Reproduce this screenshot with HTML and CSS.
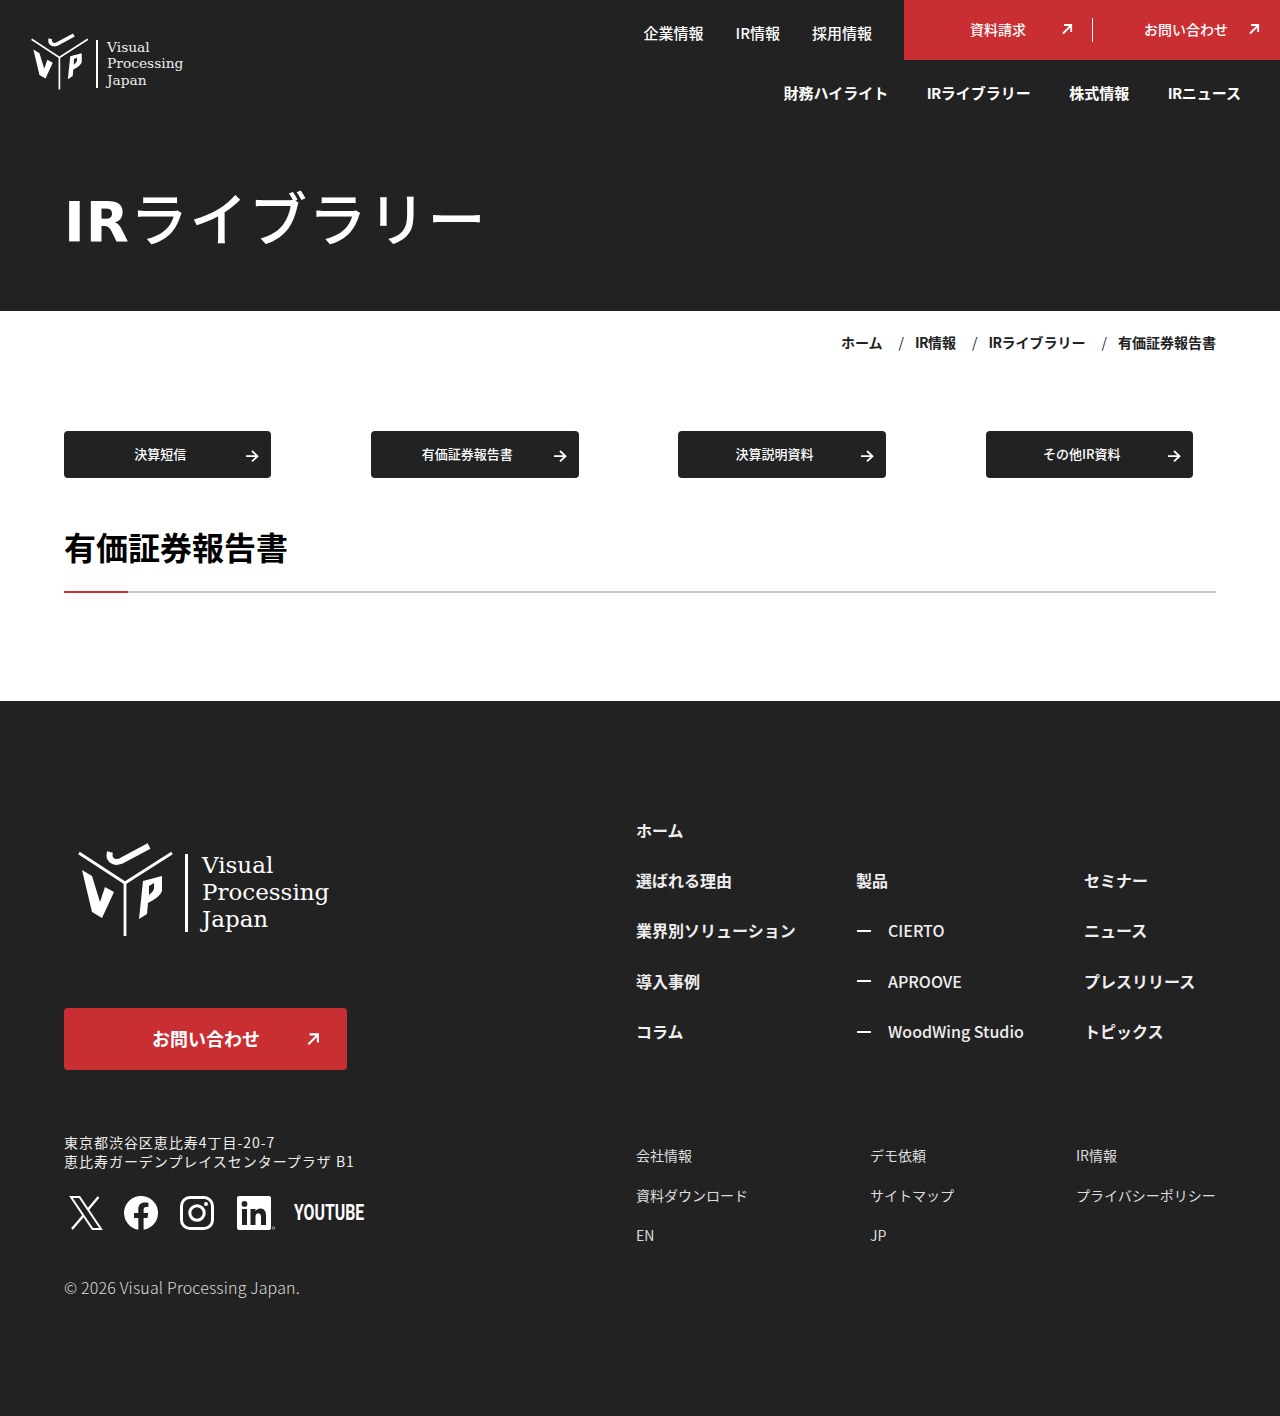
FILE: index.html
```html
<!DOCTYPE html>
<html lang="ja">
<head>
<meta charset="utf-8">
<title>有価証券報告書</title>
<link rel="stylesheet" href="styles.css">
</head>
<body>
<svg class="defs" width="0" height="0" aria-hidden="true">
  <symbol id="mark" viewBox="0 0 96 96">
    <path d="M1 12 L47 42 L94 12" fill="none" stroke="currentColor" stroke-width="2.800"/>
    <path d="M47 42 V95" fill="none" stroke="currentColor" stroke-width="2.800"/>
    <path d="M32 11 C30 18 35 23 43 20 L71 5" fill="none" stroke="currentColor" stroke-width="6"/>
    <path d="M4 29 L14 35 L22 61 L27 46 L36 51 L24 77 L14 71 Z" fill="currentColor"/>
    <path d="M65 40 L84 35 L84 50 Q82 56 70 62 L69 73 L61 78 Z M71 45 L76 42 V48 Q75 51 71 54 Z" fill="currentColor" fill-rule="evenodd"/>
  </symbol>
  <symbol id="ne" viewBox="0 0 12 12">
    <path d="M2 10.500 L10 2.500 M3 2 H10.200 V9" fill="none" stroke="currentColor" stroke-width="1.800"/>
  </symbol>
  <symbol id="right" viewBox="0 0 14 14">
    <path d="M1 7.200 H12.500 M7 2 L12.500 7.200 L7 12.400" fill="none" stroke="currentColor" stroke-width="1.800"/>
  </symbol>
</svg>

<header class="hero">
  <div class="topbar">
    <a class="logo logo-small" href="#">
      <svg class="logo-mark"><use href="#mark"/></svg>
      <span class="logo-rule"></span>
      <span class="logo-text">Visual<br>Processing<br>Japan</span>
    </a>
    <div class="navs">
      <div class="nav-top">
        <nav class="nav-primary">
          <a href="#">企業情報</a>
          <a href="#">IR情報</a>
          <a href="#">採用情報</a>
        </nav>
        <div class="cta">
          <a class="cta-item cta-docs" href="#"><span>資料請求</span><svg class="ne"><use href="#ne"/></svg></a>
          <a class="cta-item cta-contact" href="#"><span>お問い合わせ</span><svg class="ne"><use href="#ne"/></svg></a>
        </div>
      </div>
      <nav class="nav-sub">
        <a href="#">財務ハイライト</a>
        <a href="#"><span class="tight">IR</span>ライブラリー</a>
        <a href="#">株式情報</a>
        <a href="#"><span class="tight">IR</span>ニュース</a>
      </nav>
    </div>
  </div>
  <h1 class="page-title"><span class="latin">IR</span>ライブラリー</h1>
</header>

<main class="content">
  <ol class="crumbs">
    <li>ホーム</li>
    <li><span class="tight">IR</span>情報</li>
    <li><span class="tight">IR</span>ライブラリー</li>
    <li>有価証券報告書</li>
  </ol>
  <div class="tabs">
    <a class="tab" href="#"><span>決算短信</span><svg class="arrow"><use href="#right"/></svg></a>
    <a class="tab" href="#"><span>有価証券報告書</span><svg class="arrow"><use href="#right"/></svg></a>
    <a class="tab" href="#"><span>決算説明資料</span><svg class="arrow"><use href="#right"/></svg></a>
    <a class="tab" href="#"><span>その他IR資料</span><svg class="arrow"><use href="#right"/></svg></a>
  </div>
  <h2 class="section-title">有価証券報告書</h2>
</main>

<footer class="footer">
  <div class="footer-left">
    <a class="logo logo-large" href="#">
      <svg class="logo-mark"><use href="#mark"/></svg>
      <span class="logo-rule"></span>
      <span class="logo-text">Visual<br>Processing<br>Japan</span>
    </a>
    <a class="contact-btn" href="#"><span>お問い合わせ</span><svg class="ne-large"><use href="#ne"/></svg></a>
    <address class="address">東京都渋谷区恵比寿4丁目-20-7<br>恵比寿ガーデンプレイスセンタープラザ B1</address>
    <div class="social">
      <svg class="sns sns-x" viewBox="0 0 32 34"><path d="M1 1 H9.500 L31 33 H22.500 Z" fill="none" stroke="currentColor" stroke-width="2"/><path d="M28.500 1 L18 13.500 M13.500 19.500 L2 33" fill="none" stroke="currentColor" stroke-width="2.400"/></svg>
      <svg class="sns sns-fb" viewBox="0 0 34 34"><path fill="currentColor" d="M34 17 A17 17 0 1 0 14.300 33.800 V22 H10 V17 H14.300 V13.200 C14.300 9 16.800 6.600 20.700 6.600 C22.500 6.600 24.400 7 24.400 7 V11.100 H22.300 C20.200 11.100 19.600 12.400 19.600 13.700 V17 H24.200 L23.500 22 H19.600 V33.800 A17 17 0 0 0 34 17 Z"/></svg>
      <svg class="sns sns-ig" viewBox="0 0 34 34"><rect x="1.500" y="1.500" width="31" height="31" rx="8.500" fill="none" stroke="currentColor" stroke-width="3"/><circle cx="17" cy="17" r="7.200" fill="none" stroke="currentColor" stroke-width="3"/><circle cx="26" cy="8" r="2" fill="currentColor"/></svg>
      <svg class="sns sns-in" viewBox="0 0 40 34"><path fill="currentColor" fill-rule="evenodd" d="M2 0 H32 A2 2 0 0 1 34 2 V32 A2 2 0 0 1 32 34 H2 A2 2 0 0 1 0 32 V2 A2 2 0 0 1 2 0 Z M5 13 V29 H10 V13 Z M7.500 5 A2.900 2.900 0 1 0 7.500 10.800 A2.900 2.900 0 1 0 7.500 5 Z M13.500 13 V29 H18.500 V20.500 C18.500 16 24 16 24 20.500 V29 H29 V19 C29 11.500 21 11 18.500 15 V13 Z"/><circle cx="36.500" cy="32" r="1.300" fill="none" stroke="currentColor" stroke-width=".5"/></svg>
      <span class="youtube">YOUTUBE</span>
    </div>
    <p class="copyright">© 2026 Visual Processing Japan.</p>
  </div>
  <div class="footer-right">
    <div class="site-map">
      <a class="map-home" href="#">ホーム</a>
      <div class="map-cols">
        <ul class="map-col map-col-a">
          <li>選ばれる理由</li>
          <li>業界別ソリューション</li>
          <li>導入事例</li>
          <li>コラム</li>
        </ul>
        <ul class="map-col map-col-b">
          <li>製品</li>
          <li class="dash">CIERTO</li>
          <li class="dash">APROOVE</li>
          <li class="dash">WoodWing Studio</li>
        </ul>
        <ul class="map-col map-col-c">
          <li>セミナー</li>
          <li>ニュース</li>
          <li>プレスリリース</li>
          <li>トピックス</li>
        </ul>
      </div>
    </div>
    <div class="sub-map">
      <ul class="sub-col sub-col-a"><li>会社情報</li><li>資料ダウンロード</li><li>EN</li></ul>
      <ul class="sub-col sub-col-b"><li>デモ依頼</li><li>サイトマップ</li><li>JP</li></ul>
      <ul class="sub-col sub-col-c"><li>IR情報</li><li>プライバシーポリシー</li></ul>
    </div>
  </div>
</footer>
</body>
</html>
```
FILE: styles.css
```css
* { box-sizing: border-box; }
html, body { margin: 0; padding: 0; }
body {
  font-family: "Noto Sans CJK JP", "Noto Sans", sans-serif;
  color: #000;
  background: #fff;
}
a { color: inherit; text-decoration: none; }
ul, ol { list-style: none; margin: 0; padding: 0; }
.defs { position: absolute; }
.tight { letter-spacing: -.6px; }

.hero { height: 311px; background: #222; color: #fff; }
.topbar { display: flex; justify-content: space-between; align-items: flex-start; }

.logo { display: flex; color: #fff; }
.logo-text { font-family: "DejaVu Serif", "Liberation Serif", serif; display: block; }
.logo-rule { display: block; background: currentColor; }

.logo-small { margin: 32px 0 0 31px; align-items: flex-start; }
.logo-small .logo-mark { width: 58px; height: 58px; }
.logo-small .logo-rule { width: 2px; height: 48px; margin: 8px 0 0 7px; }
.logo-small .logo-text { font-size: 13.800px; line-height: 16.500px; margin: 6.500px 0 0 9px; color: #eee; }

.navs { display: flex; flex-direction: column; align-items: flex-end; width: 720px; }
.nav-top { display: flex; width: 100%; justify-content: flex-end; height: 60px; }
.nav-primary { display: flex; gap: 32px; padding: 22px 32px 0 0; font-size: 15px; line-height: 22px; font-weight: 500; }
.cta { display: flex; width: 376px; height: 60px; background: #c92e33; font-size: 14px; font-weight: 500; position: relative; }
.cta-item { display: flex; align-items: flex-start; padding-top: 19px; line-height: 21px; }
.cta-docs { width: 188px; padding-left: 66px; position: relative; }
.cta-docs::after { content: ""; position: absolute; left: 188px; top: 18px; width: 1px; height: 24px; background: #fff; }
.cta-contact { flex: 1; padding-left: 52px; }
.ne { width: 12px; height: 12px; margin-top: 4px; flex: none; }
.cta-docs .ne { margin-left: 35px; }
.cta-contact .ne { margin-left: 20px; }
.nav-sub { display: flex; gap: 38.500px; padding: 22px 39px 0 0; font-size: 15px; line-height: 22px; font-weight: 700; }

.page-title { margin: 76px 0 0 64px; font-size: 58px; line-height: 72px; font-weight: 500; letter-spacing: 1.500px; white-space: nowrap; }
.latin { font-family: "DejaVu Sans", sans-serif; font-size: 56px; font-weight: 700; letter-spacing: 1px; }

.content { height: 390px; padding: 21px 64px 0; }
.crumbs { display: flex; justify-content: flex-end; font-size: 14px; line-height: 20px; font-weight: 700; color: #222; }
.crumbs li + li::before { content: "/"; margin: 0 11px 0 16px; font-weight: 400; }
.tabs { display: grid; grid-template-columns: repeat(4, 207.360px); column-gap: 99.840px; margin-top: 79px; }
.tab { display: flex; justify-content: center; align-items: center; position: relative; height: 47px; padding: 0 15px 0 0; background: #222; border-radius: 4px; color: #fff; font-size: 13px; font-weight: 500; }
.tab span { display: block; margin-top: -3px; }
.arrow { position: absolute; right: 12px; top: 18px; width: 14px; height: 14px; }
.section-title { margin: 44px 0 0; padding-bottom: 21px; font-size: 32px; line-height: 48px; font-weight: 700; border-bottom: 2px solid #c8c8c8; position: relative; }
.section-title::after { content: ""; position: absolute; left: 0; bottom: -2px; width: 64px; height: 2px; background: #c92e33; }

.footer { display: flex; height: 715px; background: #222; color: #fff; padding: 0 64px; }
.footer-left { width: 572px; padding-top: 140px; }
.logo-large { margin-left: 14px; align-items: flex-start; height: 94px; }
.logo-large .logo-mark { width: 96px; height: 96px; }
.logo-large .logo-rule { width: 3px; height: 78px; margin: 13px 0 0 11px; }
.logo-large .logo-text { font-size: 23px; line-height: 27px; margin: 11px 0 0 14px; }

.contact-btn { display: flex; align-items: center; position: relative; width: 283px; height: 62px; margin-top: 73px; padding: 0 0 2px 88px; background: #c92e33; border-radius: 4px; font-size: 18px; font-weight: 700; }
.ne-large { position: absolute; left: 242px; top: 24px; width: 14px; height: 14px; }

.address { margin-top: 63px; font-size: 14px; line-height: 19px; font-style: normal; letter-spacing: .970px; color: #eee; }
.social { display: flex; align-items: center; margin-top: 24px; height: 36px; padding-left: 5px; }
.sns { display: block; color: #fff; flex: none; }
.sns-x { width: 34px; height: 34px; }
.sns-fb { width: 34px; height: 34px; margin-left: 21px; }
.sns-ig { width: 34px; height: 34px; margin-left: 22px; }
.sns-in { width: 40px; height: 34px; margin-left: 23px; }
.youtube { margin-left: 17px; font-family: "Liberation Sans Narrow", "Roboto", sans-serif; font-size: 22px; line-height: 34px; font-weight: 700; display: inline-block; transform: scaleX(.720); transform-origin: left center; white-space: nowrap; }
.copyright { margin: 44px 0 0; font-size: 16px; line-height: 24px; font-weight: 300; letter-spacing: .170px; color: #ddd; }

.footer-right { width: 580px; padding-top: 118px; }
.map-home { display: block; font-size: 16px; line-height: 23px; font-weight: 700; color: #eee; }
.map-cols { display: flex; margin-top: 27px; font-size: 16px; font-weight: 700; color: #eee; }
.map-col { display: flex; flex-direction: column; gap: 27px; }
.map-col li { line-height: 23.300px; }
.map-col-a { width: 220px; }
.map-col-b { width: 228px; font-weight: 500; }
.map-col-b li:first-child { font-weight: 700; }
.dash { display: flex; align-items: center; }
.dash::before { content: ""; width: 14px; height: 2px; background: #fff; margin: 0 17px 0 1px; }
.sub-map { display: flex; margin-top: 102px; font-size: 14px; font-weight: 400; color: #ddd; }
.sub-col { display: flex; flex-direction: column; gap: 20px; }
.sub-col li { line-height: 20px; }
.sub-col-a { width: 234px; }
.sub-col-b { width: 206px; }
```
